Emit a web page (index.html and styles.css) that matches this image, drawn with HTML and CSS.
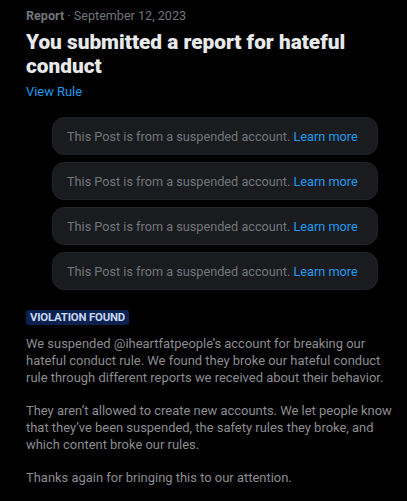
FILE: index.html
```html
<!DOCTYPE html>
<html lang="en">
<head>
<meta charset="utf-8">
<link rel="stylesheet" href="styles.css">
</head>
<body>
<main class="report">
  <div class="meta"><span class="meta-type">Report</span> · September 12, 2023</div>
  <h1 class="title">You submitted a report for hateful conduct</h1>
  <a class="link view-rule" href="#">View Rule</a>
  <div class="posts">
    <div class="post">This Post is from a suspended account. <a class="link" href="#">Learn more</a></div>
    <div class="post">This Post is from a suspended account. <a class="link" href="#">Learn more</a></div>
    <div class="post">This Post is from a suspended account. <a class="link" href="#">Learn more</a></div>
    <div class="post">This Post is from a suspended account. <a class="link" href="#">Learn more</a></div>
  </div>
  <div class="badge">VIOLATION FOUND</div>
  <div class="body">
    <p>We suspended @iheartfatpeople’s account for breaking our hateful conduct rule. We found they broke our hateful conduct rule through different reports we received about their behavior.</p>
    <p>They aren’t allowed to create new accounts. We let people know that they’ve been suspended, the safety rules they broke, and which content broke our rules.</p>
    <p>Thanks again for bringing this to our attention.</p>
  </div>
</main>
</body>
</html>
```

FILE: styles.css
```css
html, body {
  margin: 0;
  padding: 0;
  background: #000;
}
body {
  font-family: "Roboto", "Liberation Sans", sans-serif;
  color: #e7e9ea;
}
.report {
  padding: 6px 10px 0 26px;
  display: flex;
  flex-direction: column;
  align-items: flex-start;
}
.meta {
  font-size: 12.6px;
  line-height: 19px;
  color: #71767b;
}
.meta-type {
  font-weight: 700;
}
.title {
  margin: 5px 0 0;
  font-size: 20.8px;
  line-height: 24px;
  font-weight: 900;
  color: #e7e9ea;
}
.link {
  color: #1d9bf0;
  text-decoration: none;
}
.view-rule {
  font-size: 12.9px;
  line-height: 18px;
  margin-top: 5px;
}
.posts {
  width: 326px;
  margin: 16px 0 0 26px;
  display: flex;
  flex-direction: column;
  gap: 7px;
}
.post {
  background: #1a1b1f;
  border: 1px solid #202327;
  border-radius: 12px;
  height: 36px;
  display: flex;
  align-items: center;
  padding: 0 14px;
  font-size: 12.7px;
  color: #71767b;
  white-space: pre;
}
.badge {
  margin-top: 20px;
  background: #0d2150;
  color: #c6d8f2;
  font-size: 11.4px;
  font-weight: 700;
  line-height: 15px;
  padding: 0 4px;
  border-radius: 3px;
  letter-spacing: -0.2px;
}
.body {
  margin-top: 10px;
  font-size: 12.95px;
  line-height: 17px;
  color: #8b8d90;
}
.body p {
  margin: 0 0 16px;
}
```
